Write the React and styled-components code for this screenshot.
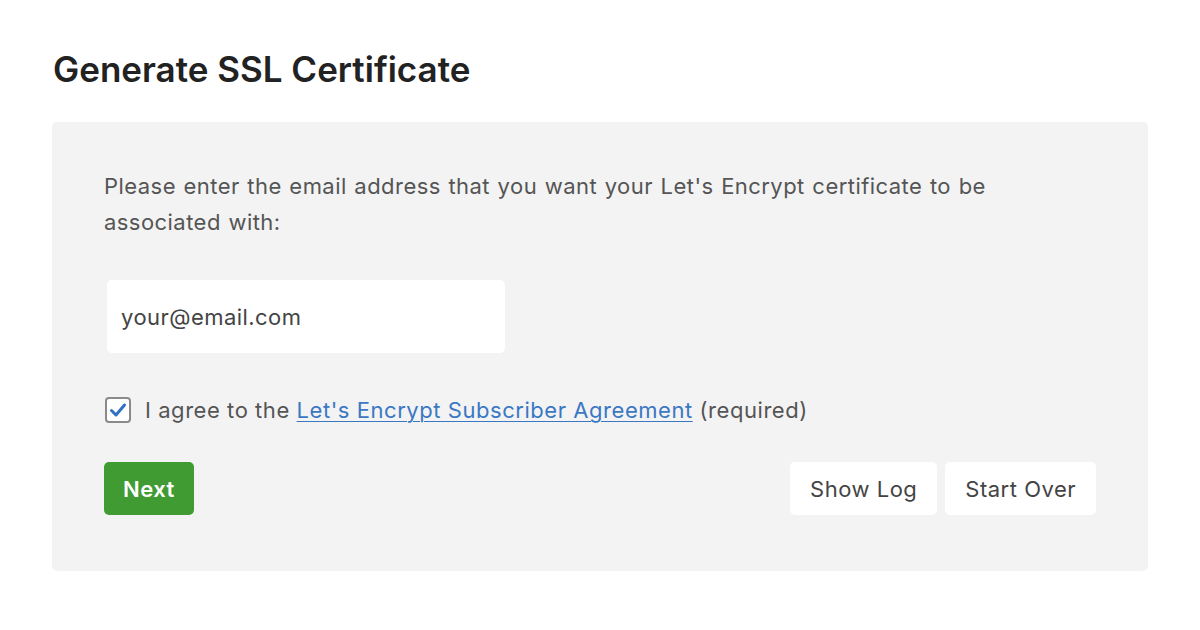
import React, { useState } from 'react';
import styled, { createGlobalStyle } from 'styled-components';

const GlobalStyle = createGlobalStyle`
  body {
    margin: 0;
    background: #fff;
    font-family: Inter, "Noto Sans", sans-serif;
  }
`;

const Page = styled.div`
  padding: 49px 52px 0 52px;
`;

const Title = styled.h1`
  margin: 0 0 32px 1px;
  font-size: 35px;
  font-weight: 600;
  line-height: 41px;
  color: #222;
`;

const Panel = styled.div`
  background: #f3f3f3;
  border-radius: 5px;
  padding: 46px 52px 56px 52px;
  height: 449px;
  box-sizing: border-box;
  font-size: 22px;
  letter-spacing: 0.45px;
`;

const Intro = styled.p`
  margin: 0 0 40px 0;
  font-size: 22px;
  line-height: 36px;
  color: #555;
  word-spacing: 1px;
  max-width: 940px;
`;

const EmailInput = styled.input`
  display: block;
  box-sizing: border-box;
  width: 398px;
  height: 73px;
  margin-left: 3px;
  padding: 0 14px;
  border: none;
  border-radius: 5px;
  background: #fff;
  font-family: inherit;
  font-size: 22px;
  letter-spacing: 0.45px;
  color: #444;
  outline: none;
`;

const AgreeRow = styled.label`
  display: flex;
  align-items: center;
  gap: 14px;
  margin: 44px 0 39px 1px;
  color: #555;
  letter-spacing: 0.55px;
  cursor: pointer;
`;

const Box = styled.span`
  display: inline-flex;
  align-items: center;
  justify-content: center;
  box-sizing: border-box;
  width: 26px;
  height: 26px;
  border: 2px solid #8a8a8a;
  border-radius: 4px;
  background: #fff;
`;

const Link = styled.a`
  color: #3a78c3;
  text-decoration: underline;
  text-underline-offset: 3px;
  text-decoration-thickness: 1px;
`;

const Actions = styled.div`
  display: flex;
  align-items: center;
  justify-content: space-between;
`;

const Group = styled.div`
  display: flex;
  gap: 8px;
`;

const Button = styled.button`
  height: 53px;
  padding: 0 ${p => (p.$primary ? '19px' : '20px')};
  border: none;
  border-radius: 5px;
  background: ${p => (p.$primary ? '#3f9b32' : '#fff')};
  color: ${p => (p.$primary ? '#fff' : '#444')};
  font-family: inherit;
  font-size: 22px;
  letter-spacing: 0.5px;
  font-weight: ${p => (p.$primary ? 600 : 400)};
  cursor: pointer;
`;

export default function App() {
  const [agreed, setAgreed] = useState(true);
  return (
    <>
      <GlobalStyle />
      <Page>
        <Title>Generate SSL Certificate</Title>
        <Panel>
          <Intro>
            Please enter the email address that you want your Let's Encrypt certificate to be
            associated with:
          </Intro>
          <EmailInput type="email" defaultValue="your@email.com" />
          <AgreeRow onClick={() => setAgreed(!agreed)}>
            <Box>
              {agreed && (
                <svg width="20" height="20" viewBox="0 0 20 20">
                  <path d="M3.5 10.5l4.5 4.5 8.5-10" fill="none" stroke="#2f72c4" strokeWidth="3" strokeLinecap="round" strokeLinejoin="round" />
                </svg>
              )}
            </Box>
            <span>
              I agree to the <Link href="#" onClick={e => e.preventDefault()}>Let's Encrypt Subscriber Agreement</Link> (required)
            </span>
          </AgreeRow>
          <Actions>
            <Button $primary>Next</Button>
            <Group>
              <Button>Show Log</Button>
              <Button>Start Over</Button>
            </Group>
          </Actions>
        </Panel>
      </Page>
    </>
  );
}
